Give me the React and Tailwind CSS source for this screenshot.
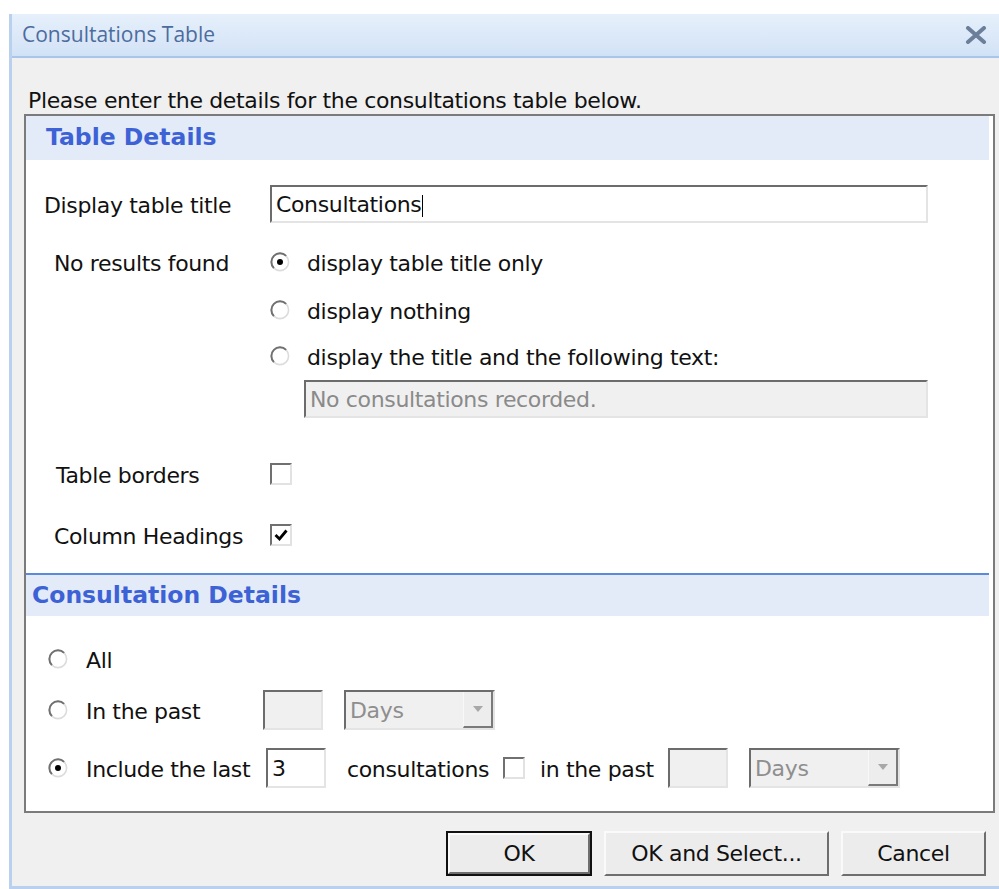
import React from 'react'

/* Consultations Table — classic Windows-style settings dialog. */

const font = { fontFamily: '"DejaVu Sans", Tahoma, Verdana, sans-serif' }

function Radio({ checked }) {
  return (
    <svg width="20" height="20" viewBox="0 0 20 20" className="shrink-0">
      <circle cx="10" cy="10" r="8.6" fill="#fff" stroke="#dcdcdc" strokeWidth="1.6" />
      <path d="M3.9 16.1 A8.6 8.6 0 0 1 16.1 3.9" fill="none" stroke="#707070" strokeWidth="2" />
      {checked && <circle cx="10" cy="10" r="3" fill="#000" />}
    </svg>
  )
}

function Checkbox({ checked }) {
  return (
    <div className="flex h-[22px] w-[22px] shrink-0 items-center justify-center border-2 border-t-[#707070] border-l-[#707070] border-r-[#e2e2e2] border-b-[#e2e2e2] bg-white">
      {checked && (
        <svg width="16" height="16" viewBox="0 0 16 16">
          <path d="M2.5 8 L6.5 12 L13.5 3.5" fill="none" stroke="#000" strokeWidth="2.8" />
        </svg>
      )}
    </div>
  )
}

function TextBox({ value, disabled, className = '' }) {
  return (
    <div
      className={`flex items-center border-2 border-t-[#6c6c6c] border-l-[#6c6c6c] border-r-[#e4e4e4] border-b-[#e4e4e4] pl-[4px] ${
        disabled ? 'bg-[#f0f0f0] text-[#8a8a8a]' : 'bg-white text-[#111]'
      } ${className}`}
    >
      {value}
    </div>
  )
}

function Select({ className = '' }) {
  return (
    <div className={`flex items-stretch border-2 border-t-[#6c6c6c] border-l-[#6c6c6c] border-r-[#e4e4e4] border-b-[#e4e4e4] bg-[#f0f0f0] ${className}`}>
      <div className="flex flex-1 items-center pl-[4px] text-[#8e8e8e]">Days</div>
      <div className="flex w-[30px] items-center justify-center border-l border-l-[#f8f8f8] border-r-2 border-b-2 border-r-[#7a7a7a] border-b-[#7a7a7a] bg-[#ededed]">
        <svg width="10" height="6" viewBox="0 0 10 6">
          <path d="M0 0 H10 L5 6 Z" fill="#a8a8a8" />
        </svg>
      </div>
    </div>
  )
}

function Button({ children, primary, className = '' }) {
  const face = (
    <div className="flex h-full w-full items-center justify-center border-2 border-t-[#fafafa] border-l-[#fafafa] border-r-[#6e6e6e] border-b-[#6e6e6e] bg-[#ececec] text-[#111]">
      {children}
    </div>
  )
  if (primary) {
    return <div className={`h-[45px] border-2 border-[#111] ${className}`}>{face}</div>
  }
  return <div className={`h-[45px] ${className}`}>{face}</div>
}

export default function App() {
  return (
    <div className="h-[889px] overflow-hidden bg-white pl-[9px] pt-[14px] text-[22px] tracking-[-0.35px] text-[#111]" style={font}>
      <div className="flex h-[875px] flex-col border-l-[3px] border-b-[3px] border-[#b9d1ee] bg-[#f0f0f0]">
        {/* title bar */}
        <div className="flex h-[44px] items-center justify-between border-b-2 border-[#a9c6ea] bg-gradient-to-b from-[#e6f0fb] to-[#d2e2f6] pl-[10px] pr-[10px]">
          <span className="text-[21px] tracking-normal text-[#4d6c9e]" style={{ fontFamily: '"Open Sans", "DejaVu Sans", sans-serif' }}>
            Consultations Table
          </span>
          <svg width="26" height="18" viewBox="0 0 26 18">
            <path d="M5 2 L21 16 M21 2 L5 16" stroke="#6b7f9a" strokeWidth="4" strokeLinecap="round" />
          </svg>
        </div>

        <div className="flex flex-1 flex-col pl-[12px] pr-[4px]">
          <p className="mt-[29px] h-[27px] pl-[4px] leading-[28px]">Please enter the details for the consultations table below.</p>

          {/* group box */}
          <div className="flex h-[699px] flex-col border-2 border-[#7b7b7b] bg-white">
            <div className="mr-[4px] flex h-[44px] items-center bg-[#e3ebf8] pl-[20px] text-[23.5px] font-bold tracking-normal text-[#3d62d6]">
              Table Details
            </div>

            <div className="mt-[25px] flex h-[38px] items-center">
              <span className="w-[244px] pl-[18px] pt-[3px]">Display table title</span>
              <TextBox value={<span>Consultations<span className="ml-px inline-block h-[22px] w-px bg-black align-middle" /></span>} className="h-[38px] w-[658px]" />
            </div>

            <div className="mt-[15px] flex">
              <span className="flex h-[48px] w-[244px] items-center pl-[28px] pt-[2px]">No results found</span>
              <div className="flex flex-col">
                <label className="flex h-[48px] items-center gap-[17px]"><Radio checked /><span className="pt-[2px]">display table title only</span></label>
                <label className="flex h-[48px] items-center gap-[17px]"><Radio /><span className="pt-[2px]">display nothing</span></label>
                <label className="flex h-[44px] items-center gap-[17px]"><Radio /><span className="pt-[2px]">display the title and the following text:</span></label>
                <TextBox value="No consultations recorded." disabled className="ml-[34px] mt-[2px] h-[38px] w-[624px]" />
              </div>
            </div>

            <div className="mt-[38px] flex h-[36px] items-center">
              <span className="w-[244px] pl-[30px] pt-[2px]">Table borders</span>
              <Checkbox />
            </div>
            <div className="mt-[25px] flex h-[36px] items-center">
              <span className="w-[244px] pl-[28px] pt-[2px]">Column Headings</span>
              <Checkbox checked />
            </div>

            <div className="mr-[4px] mt-[20px] flex h-[43px] items-center border-t-2 border-[#5b89dc] bg-[#e3ebf8] pl-[6px] text-[23.5px] font-bold tracking-normal text-[#3d62d6]">
              Consultation Details
            </div>

            <div className="pl-[22px]">
              <label className="mt-[24px] flex h-[38px] items-center gap-[18px]"><Radio /><span className="pt-[2px]">All</span></label>
              <div className="mt-[12px] flex h-[40px] items-center">
                <label className="flex w-[215px] items-center gap-[18px]"><Radio /><span className="pt-[2px]">In the past</span></label>
                <TextBox disabled className="h-[40px] w-[60px]" />
                <Select className="ml-[21px] h-[40px] w-[151px]" />
              </div>
              <div className="mt-[18px] flex h-[40px] items-center">
                <label className="flex w-[218px] items-center gap-[18px]"><Radio checked /><span className="pt-[2px]">Include the last</span></label>
                <TextBox value="3" className="h-[40px] w-[60px]" />
                <span className="ml-[21px] w-[156px] pt-[2px]">consultations</span>
                <Checkbox />
                <span className="ml-[15px] w-[128px] pt-[2px]">in the past</span>
                <TextBox disabled className="h-[40px] w-[60px]" />
                <Select className="ml-[21px] h-[40px] w-[151px]" />
              </div>
            </div>
          </div>

          {/* buttons */}
          <div className="mt-[18px] flex justify-end gap-[12px] pr-[9px]">
            <Button primary className="w-[146px]">OK</Button>
            <Button className="w-[225px]">OK and Select...</Button>
            <Button className="w-[145px]">Cancel</Button>
          </div>
        </div>
      </div>
    </div>
  )
}
